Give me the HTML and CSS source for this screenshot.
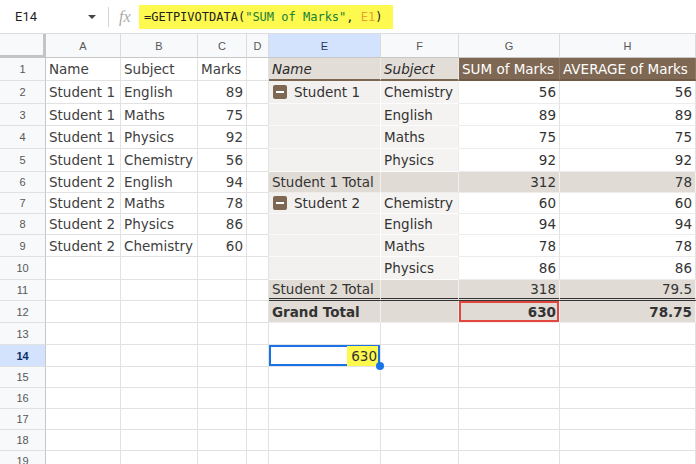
FILE: index.html
```html
<!DOCTYPE html>
<html>
<head>
<meta charset="utf-8">
<link rel="stylesheet" href="styles.css">
</head>
<body>
<div class="fbar">
  <div class="name-box"><span>E14</span><span class="caret"></span></div>
  <div class="sep"></div>
  <div class="fx">fx</div>
  <div class="formula">=GETPIVOTDATA(<span class="str">"SUM of Marks"</span>, <span class="ref">E1</span>)</div>
</div>
<div class="sheet">
  <div class="corner"></div><div class="ch">A</div><div class="ch">B</div><div class="ch">C</div><div class="ch">D</div><div class="ch sel">E</div><div class="ch">F</div><div class="ch">G</div><div class="ch">H</div>

  <div class="rh">1</div><div class="c">Name</div><div class="c">Subject</div><div class="c">Marks</div><div class="c"></div><div class="c ph it">Name</div><div class="c ph it">Subject</div><div class="c phd">SUM of Marks</div><div class="c phd">AVERAGE of Marks</div>

  <div class="rh">2</div><div class="c">Student 1</div><div class="c">English</div><div class="c n">89</div><div class="c"></div><div class="c pe"><span class="minus"></span>Student 1</div><div class="c pf">Chemistry</div><div class="c n pv">56</div><div class="c n pv">56</div>

  <div class="rh">3</div><div class="c">Student 1</div><div class="c">Maths</div><div class="c n">75</div><div class="c"></div><div class="c pe"></div><div class="c pf">English</div><div class="c n pv">89</div><div class="c n pv">89</div>

  <div class="rh">4</div><div class="c">Student 1</div><div class="c">Physics</div><div class="c n">92</div><div class="c"></div><div class="c pe"></div><div class="c pf">Maths</div><div class="c n pv">75</div><div class="c n pv">75</div>

  <div class="rh">5</div><div class="c">Student 1</div><div class="c">Chemistry</div><div class="c n">56</div><div class="c"></div><div class="c pe"></div><div class="c pf">Physics</div><div class="c n pv">92</div><div class="c n pv">92</div>

  <div class="rh">6</div><div class="c">Student 2</div><div class="c">English</div><div class="c n">94</div><div class="c"></div><div class="c pt">Student 1 Total</div><div class="c pt"></div><div class="c n pt">312</div><div class="c n pt">78</div>

  <div class="rh">7</div><div class="c">Student 2</div><div class="c">Maths</div><div class="c n">78</div><div class="c"></div><div class="c pe"><span class="minus"></span>Student 2</div><div class="c pf">Chemistry</div><div class="c n pv">60</div><div class="c n pv">60</div>

  <div class="rh">8</div><div class="c">Student 2</div><div class="c">Physics</div><div class="c n">86</div><div class="c"></div><div class="c pe"></div><div class="c pf">English</div><div class="c n pv">94</div><div class="c n pv">94</div>

  <div class="rh">9</div><div class="c">Student 2</div><div class="c">Chemistry</div><div class="c n">60</div><div class="c"></div><div class="c pe"></div><div class="c pf">Maths</div><div class="c n pv">78</div><div class="c n pv">78</div>

  <div class="rh">10</div><div class="c"></div><div class="c"></div><div class="c"></div><div class="c"></div><div class="c pe"></div><div class="c pf">Physics</div><div class="c n pv">86</div><div class="c n pv">86</div>

  <div class="rh">11</div><div class="c"></div><div class="c"></div><div class="c"></div><div class="c"></div><div class="c pt dbl">Student 2 Total</div><div class="c pt dbl"></div><div class="c n pt dbl">318</div><div class="c n pt dbl">79.5</div>

  <div class="rh">12</div><div class="c"></div><div class="c"></div><div class="c"></div><div class="c"></div><div class="c pt b">Grand Total</div><div class="c pt"></div><div class="c n pt b red">630</div><div class="c n pt b">78.75</div>

  <div class="rh">13</div><div class="c"></div><div class="c"></div><div class="c"></div><div class="c"></div><div class="c"></div><div class="c"></div><div class="c"></div><div class="c"></div>

  <div class="rh sel">14</div><div class="c"></div><div class="c"></div><div class="c"></div><div class="c"></div><div class="c n active"><span class="hl">630</span><span class="handle"></span></div><div class="c"></div><div class="c"></div><div class="c"></div>

  <div class="rh">15</div><div class="c"></div><div class="c"></div><div class="c"></div><div class="c"></div><div class="c"></div><div class="c"></div><div class="c"></div><div class="c"></div>

  <div class="rh">16</div><div class="c"></div><div class="c"></div><div class="c"></div><div class="c"></div><div class="c"></div><div class="c"></div><div class="c"></div><div class="c"></div>

  <div class="rh">17</div><div class="c"></div><div class="c"></div><div class="c"></div><div class="c"></div><div class="c"></div><div class="c"></div><div class="c"></div><div class="c"></div>

  <div class="rh">18</div><div class="c"></div><div class="c"></div><div class="c"></div><div class="c"></div><div class="c"></div><div class="c"></div><div class="c"></div><div class="c"></div>

  <div class="rh">19</div><div class="c"></div><div class="c"></div><div class="c"></div><div class="c"></div><div class="c"></div><div class="c"></div><div class="c"></div><div class="c"></div>
</div>
</body>
</html>
```
FILE: styles.css
```css
* { box-sizing: border-box; }
html, body { margin: 0; padding: 0; background: #fff; overflow: hidden; }
body { width: 696px; height: 464px; font-family: "DejaVu Sans", Verdana, sans-serif; }

.fbar {
  height: 34px;
  display: flex;
  align-items: center;
  border-bottom: 1px solid #dadce0;
  background: #fff;
}
.name-box {
  width: 96px;
  padding-left: 15px;
  display: flex;
  align-items: center;
  justify-content: space-between;
  font: 13px Roboto, "Liberation Sans", sans-serif;
  color: #1f1f1f;
}
.caret {
  width: 0; height: 0;
  border-left: 4px solid transparent;
  border-right: 4px solid transparent;
  border-top: 4px solid #444;
}
.sep { width: 1px; height: 20px; background: #d5d5d5; margin-left: 12px; }
.fx {
  margin-left: 10px;
  width: 20px;
  font: italic 16px "Liberation Serif", serif;
  color: #aaa;
}
.formula {
  height: 24px;
  width: 254px;
  padding: 0 5px;
  background: #fdf94f;
  display: flex;
  align-items: center;
  font: 12px "DejaVu Sans Mono", monospace;
  color: #222;
  white-space: pre;
}
.formula .str { color: #188038; }
.formula .ref { color: #e8a33a; }

.sheet {
  display: grid;
  grid-template-columns: 46px 75px 77px 49px 22px 112px 78px 101px 136px;
  grid-template-rows: 24px 23px 23px 22px 23px 23px 21px 21px 21px 22px 23px 21px 22px 22px 22px 21px 21px 21px 21px 21px;
}
.corner {
  background: #f8f9fa;
  border-right: 3px solid #c4c4c4;
  border-bottom: 3px solid #c4c4c4;
}
.ch {
  background: #f8f9fa;
  border-right: 1px solid #dcdcdc;
  border-bottom: 1px solid #c7c7c7;
  display: flex;
  align-items: center;
  justify-content: center;
  font: 11px "Liberation Sans", Arial, sans-serif;
  color: #575757;
}
.ch.sel { background: #d3e3fd; color: #1f3a68; }
.rh {
  background: #f8f9fa;
  border-right: 1px solid #c7c7c7;
  border-bottom: 1px solid #e1e1e1;
  display: flex;
  align-items: center;
  justify-content: center;
  font: 11px "Liberation Sans", Arial, sans-serif;
  color: #575757;
}
.rh.sel { background: #d3e3fd; color: #0b2f6b; font-weight: bold; }

.c {
  position: relative;
  border-right: 1px solid #e2e2e2;
  border-bottom: 1px solid #e2e2e2;
  padding: 0 3px;
  display: flex;
  align-items: center;
  white-space: nowrap;
  font-size: 13.5px;
  color: #404040;
}
.n { justify-content: flex-end; padding-right: 3px; }
.it { font-style: italic; }
.b { font-weight: bold; color: #1a1a1a; }

.ph { background: #e2ddd7; color: #2a2a2a; border-right-color: #ede9e5; border-bottom: 2px solid #7b6651; }
.phd { background: #7e6853; color: #fff; border-right-color: #8d7863; border-bottom: 2px solid #6e5a46; }
.pe { background: #f3f1ef; color: #333; border-right-color: #ffffff; border-bottom-color: #fafafa; }
.pf { background: #f4f3f1; color: #333; border-right-color: #eeeeee; border-bottom-color: #fdfdfd; }
.pv { color: #333; border-bottom-color: #ececec; }
.pt { background: #e0dbd5; color: #333; border-right-color: #f2efec; border-bottom-color: #efece9; }
.dbl { border-bottom: 3px double #333; }
.red { box-shadow: inset 0 0 0 2px #e2463f; }

.minus {
  width: 14px;
  height: 14px;
  border-radius: 2px;
  background: #7e6853;
  margin: 0 7px 0 1px;
  display: flex;
  align-items: center;
  justify-content: center;
}
.minus::after { content: ""; width: 8px; height: 2px; background: #fff; }

.active { box-shadow: inset 0 0 0 2px #1a73e8; padding-right: 2px; }
.hl { background: #fdf94f; padding: 2px 1px 2px 4px; color: #333; }
.handle {
  position: absolute;
  right: -4px;
  bottom: -4px;
  width: 8px;
  height: 8px;
  border-radius: 50%;
  background: #1a73e8;
  z-index: 2;
}
```
